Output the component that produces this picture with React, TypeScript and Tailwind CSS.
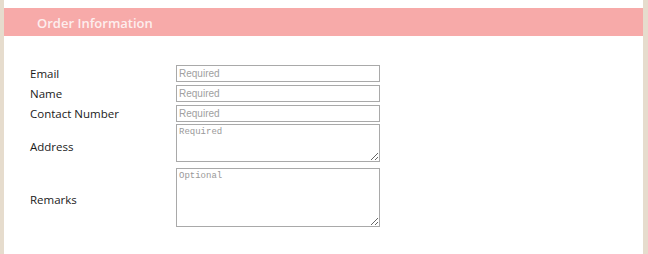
export default function App() {
  const inputCls =
    "h-[17px] w-[204px] border border-[#a9a9a9] bg-white px-[2px] text-[10px] text-[#333] outline-none placeholder:text-[#a0a0a0] [font-family:'Liberation_Sans',sans-serif]";
  const areaCls =
    "block w-[204px] border border-[#a9a9a9] bg-white px-[2px] pt-[2px] text-[9px] leading-[11px] text-[#333] outline-none placeholder:text-[#999] [font-family:'Liberation_Mono',monospace]";

  return (
    <div className="flex h-[254px] w-[648px] bg-[#e6dccd]">
      <div className="ml-[4px] mr-[5px] flex-1 bg-white pt-[8px]">
        {/* Header */}
        <div className="flex h-[28px] items-center bg-[#f7aaa9] pl-[33px] pt-[3px]">
          <h2 className="text-[13px] font-semibold text-[#fdeeee] [font-family:'Open_Sans',sans-serif]">
            Order Information
          </h2>
        </div>

        {/* Form */}
        <div className="grid grid-cols-[146px_auto] items-center gap-y-[3px] pl-[26px] pt-[29px] text-[11.5px] leading-[17px] text-[#1a1a1a] [font-family:'Open_Sans',sans-serif]">
          <label>Email</label>
          <input className={inputCls} placeholder="Required" />
          <label>Name</label>
          <input className={inputCls} placeholder="Required" />
          <label>Contact Number</label>
          <input className={inputCls} placeholder="Required" />
          <label className="mt-[5px]">Address</label>
          <textarea className={`${areaCls} mt-[-1px] h-[38px]`} placeholder="Required" />
          <label className="mt-[7px]">Remarks</label>
          <textarea className={`${areaCls} mt-[3px] h-[59px]`} placeholder="Optional" />
        </div>
      </div>
    </div>
  );
}
